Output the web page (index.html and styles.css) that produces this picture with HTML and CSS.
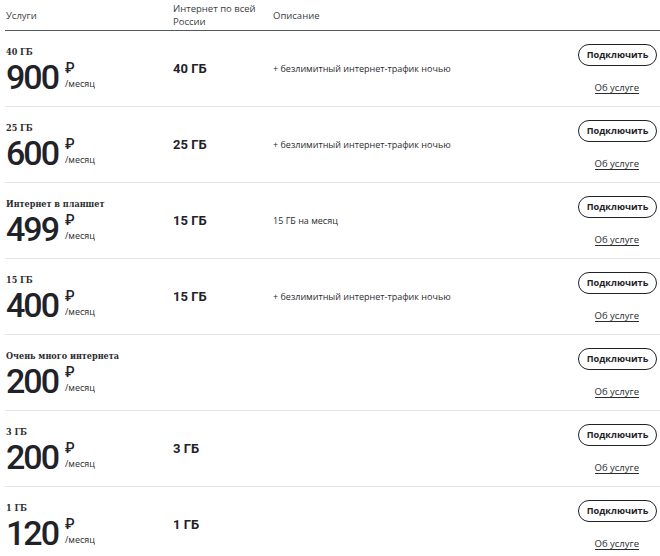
FILE: index.html
```html
<!DOCTYPE html>
<html lang="ru">
<head>
<meta charset="utf-8">
<title>Тарифы</title>
<link rel="stylesheet" href="styles.css">
</head>
<body>
<div class="table">
  <div class="head">
    <div class="h">Услуги</div>
    <div class="h">Интернет по всей<br>России</div>
    <div class="h">Описание</div>
    <div></div>
  </div>

  <div class="row">
    <div class="svc"><div class="title">40 ГБ</div><div class="price"><span class="num">900</span><span class="unit"><span class="rub">₽</span><span class="per">/месяц</span></span></div></div>
    <div class="gb">40 ГБ</div>
    <div class="desc">+ безлимитный интернет-трафик ночью</div>
    <div class="act"><button class="btn">Подключить</button><a class="more" href="#">Об услуге</a></div>
  </div>

  <div class="row">
    <div class="svc"><div class="title">25 ГБ</div><div class="price"><span class="num">600</span><span class="unit"><span class="rub">₽</span><span class="per">/месяц</span></span></div></div>
    <div class="gb">25 ГБ</div>
    <div class="desc">+ безлимитный интернет-трафик ночью</div>
    <div class="act"><button class="btn">Подключить</button><a class="more" href="#">Об услуге</a></div>
  </div>

  <div class="row">
    <div class="svc"><div class="title">Интернет в планшет</div><div class="price"><span class="num">499</span><span class="unit"><span class="rub">₽</span><span class="per">/месяц</span></span></div></div>
    <div class="gb">15 ГБ</div>
    <div class="desc">15 ГБ на месяц</div>
    <div class="act"><button class="btn">Подключить</button><a class="more" href="#">Об услуге</a></div>
  </div>

  <div class="row">
    <div class="svc"><div class="title">15 ГБ</div><div class="price"><span class="num">400</span><span class="unit"><span class="rub">₽</span><span class="per">/месяц</span></span></div></div>
    <div class="gb">15 ГБ</div>
    <div class="desc">+ безлимитный интернет-трафик ночью</div>
    <div class="act"><button class="btn">Подключить</button><a class="more" href="#">Об услуге</a></div>
  </div>

  <div class="row">
    <div class="svc"><div class="title">Очень много интернета</div><div class="price"><span class="num">200</span><span class="unit"><span class="rub">₽</span><span class="per">/месяц</span></span></div></div>
    <div class="gb"></div>
    <div class="desc"></div>
    <div class="act"><button class="btn">Подключить</button><a class="more" href="#">Об услуге</a></div>
  </div>

  <div class="row">
    <div class="svc"><div class="title">3 ГБ</div><div class="price"><span class="num">200</span><span class="unit"><span class="rub">₽</span><span class="per">/месяц</span></span></div></div>
    <div class="gb">3 ГБ</div>
    <div class="desc"></div>
    <div class="act"><button class="btn">Подключить</button><a class="more" href="#">Об услуге</a></div>
  </div>

  <div class="row">
    <div class="svc"><div class="title">1 ГБ</div><div class="price"><span class="num">120</span><span class="unit"><span class="rub">₽</span><span class="per">/месяц</span></span></div></div>
    <div class="gb">1 ГБ</div>
    <div class="desc"></div>
    <div class="act"><button class="btn">Подключить</button><a class="more" href="#">Об услуге</a></div>
  </div>
</div>
</body>
</html>
```

FILE: styles.css
```css
html, body {
  margin: 0;
  padding: 0;
  background: #ffffff;
  overflow: hidden;
}
body {
  font-family: "Open Sans", "Noto Sans", sans-serif;
  color: #1f2229;
}
.table {
  margin-left: 5px;
}
.head, .row {
  display: grid;
  grid-template-columns: 167px 100px 1fr 90px;
  padding-left: 1px;
  padding-right: 3px;
}
.head {
  height: 30px;
  align-items: center;
  border-bottom: 1px solid #555a60;
}
.h {
  font-size: 9.5px;
  line-height: 13px;
  color: #3a3d42;
}
.row {
  height: 75px;
  align-items: center;
  border-bottom: 1px solid #e4e4e4;
}
.svc {
  align-self: start;
  padding-top: 15px;
}
.title {
  font-family: "DejaVu Serif", serif;
  font-stretch: condensed;
  font-weight: bold;
  font-size: 9px;
  line-height: 12px;
  color: #2a2c30;
}
.price {
  display: flex;
  align-items: flex-start;
  margin-top: 2px;
}
.num {
  font-family: Roboto, sans-serif;
  font-weight: 500;
  font-size: 34px;
  line-height: 35px;
  letter-spacing: -2px;
  color: #1f2229;
}
.unit {
  display: flex;
  flex-direction: column;
  margin-left: 7px;
  margin-top: 1px;
}
.rub {
  font-family: Roboto, sans-serif;
  font-weight: 500;
  font-size: 14px;
  line-height: 14px;
}
.per {
  font-size: 9px;
  line-height: 12px;
  margin-top: 3px;
  color: #2a2c30;
}
.gb {
  font-family: Roboto, sans-serif;
  font-weight: 700;
  font-size: 13px;
  color: #1f2229;
}
.desc {
  font-size: 9px;
  color: #2a2c30;
}
.act {
  display: flex;
  flex-direction: column;
  align-items: flex-end;
}
.btn {
  width: 79px;
  height: 22px;
  box-sizing: border-box;
  border: 1.6px solid #1f2229;
  border-radius: 11px;
  background: #fff;
  font-family: "Open Sans", sans-serif;
  font-weight: 700;
  font-size: 9.2px;
  color: #1f2229;
  padding: 0;
}
.more {
  margin-top: 16px;
  margin-right: 18px;
  font-size: 9.5px;
  line-height: 11px;
  color: #2a2c30;
  text-decoration: none;
  border-bottom: 1px solid #2a2c30;
}
```
